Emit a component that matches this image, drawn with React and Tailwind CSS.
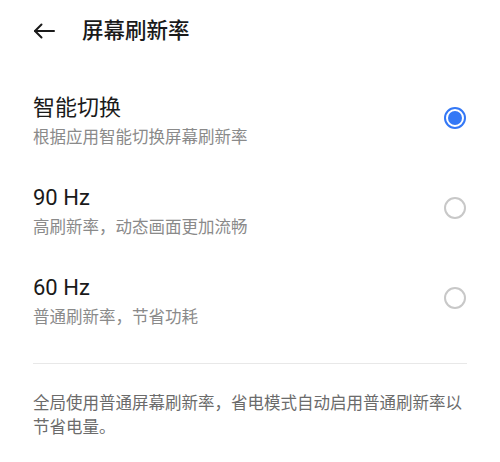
import React from "react";

const font = { fontFamily: "Roboto, 'Noto Sans CJK SC', sans-serif" };

const options = [
  { title: "智能切换", desc: "根据应用智能切换屏幕刷新率", checked: true },
  { title: "90 Hz", desc: "高刷新率，动态画面更加流畅" },
  { title: "60 Hz", desc: "普通刷新率，节省功耗" },
];

function Radio({ checked }) {
  if (checked) {
    return (
      <span className="flex h-[22px] w-[22px] items-center justify-center rounded-full border-2 border-[#3478f6]">
        <span className="h-[14px] w-[14px] rounded-full bg-[#3478f6]" />
      </span>
    );
  }
  return <span className="block h-[22px] w-[22px] rounded-full border-2 border-[#c8c8c8]" />;
}

export default function App() {
  return (
    <div className="h-[462px] w-[500px] overflow-hidden bg-white" style={font}>
      <div className="flex h-[62px] items-center px-[33px]">
        <svg width="22" height="16" viewBox="0 0 22 16" fill="none" stroke="#1a1a1a" strokeWidth="2" strokeLinecap="round" strokeLinejoin="round">
          <path d="M21 8H2" />
          <path d="M8.5 1.5L2 8l6.5 6.5" />
        </svg>
        <h1 className="ml-[27px] text-[21.5px] font-medium leading-none text-[#1a1a1a]">屏幕刷新率</h1>
      </div>

      <div className="mt-[13px] px-[33px]">
        {options.map((o) => (
          <div key={o.title} className="flex h-[90px] items-center justify-between">
            <div className="flex flex-col pt-[2px]">
              <span className="text-[22px] leading-[30px] text-[#1a1a1a]">{o.title}</span>
              <span className="mt-[4px] text-[16.5px] leading-[22px] text-[#8a8a8a]">{o.desc}</span>
            </div>
            <div className="mr-[1px] mb-[4px]">
              <Radio checked={o.checked} />
            </div>
          </div>
        ))}
        <div className="mt-[18px] h-px bg-[#e8e8e8]" />
        <p className="pt-[28px] text-[16.5px] leading-[24px] text-[#6b6b6b]">
          全局使用普通屏幕刷新率，省电模式自动启用普通刷新率以节省电量。
        </p>
      </div>
    </div>
  );
}
